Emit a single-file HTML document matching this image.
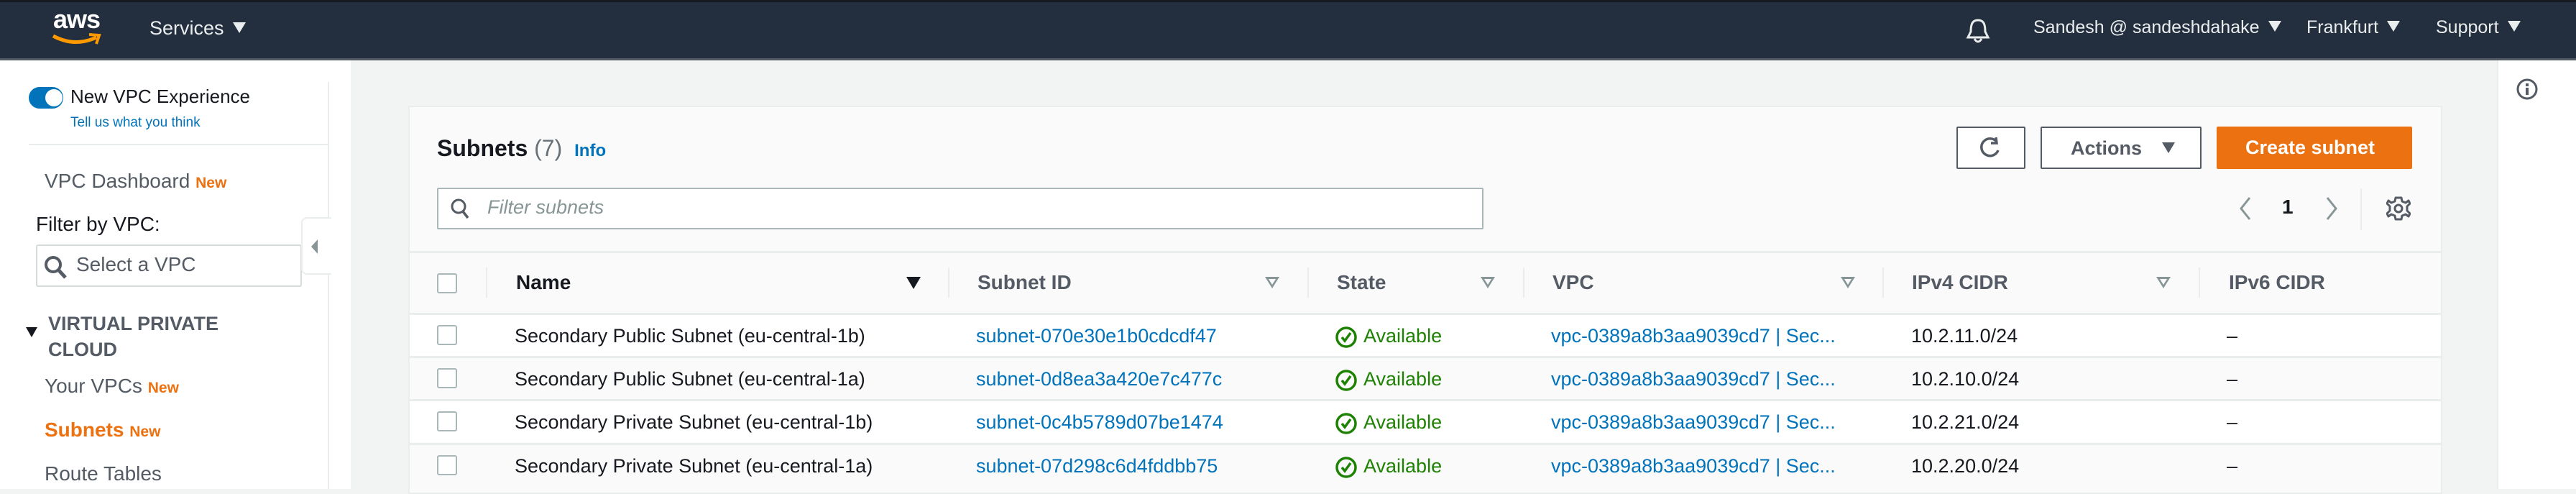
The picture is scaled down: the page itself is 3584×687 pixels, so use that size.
<!DOCTYPE html>
<html><head><meta charset="utf-8"><style>
*{margin:0;padding:0;box-sizing:border-box}
body{width:3584px;height:680px;overflow:hidden;background:#f2f3f3;font-family:"Liberation Sans",sans-serif;position:relative;color:#16191f}
.a{position:absolute;white-space:nowrap}
.hdr{left:0;top:0;width:3584px;height:84px;background:#232f3e;border-bottom:3px solid #545b64;border-top:3px solid #16191f}
.ht{color:#eaeded;font-size:25px;top:24px}
.tri{display:inline-block;width:0;height:0;border-left:9px solid transparent;border-right:9px solid transparent;border-top:15px solid currentColor;margin-left:12px;vertical-align:2px}
.side{left:0;top:84px;width:488px;height:596px;background:#fff}
.nav{font-size:28px;color:#545b64}
.new{color:#ec7211;font-size:21px;font-weight:bold}
.panel{left:568px;top:147px;width:2830px;height:540px;background:#fafafa;border:2px solid #eaeded}
.th{font-size:28px;font-weight:bold;color:#545b64;top:377px}
.div{width:2px;height:42px;background:#eaeded;top:372px}
.fi{top:385px;width:0;height:0;border-left:10px solid transparent;border-right:10px solid transparent;border-top:16px solid #879596}
.fi:after{content:"";position:absolute;left:-5px;top:-13px;border-left:5px solid transparent;border-right:5px solid transparent;border-top:8px solid #fafafa}
.row{left:570px;width:2826px;height:60px;border-top:3px solid #eaeded}
.cb{width:28px;height:28px;border:2px solid #aab7b8;border-radius:3px;background:#fff;left:608px}
.td{font-size:27px}
.lk{color:#0073bb}
.ok{color:#1d8102}
</style></head><body>
<div class="a hdr"></div>
<div class="a" style="left:74px;top:6px;color:#fff;font-size:36px;font-weight:bold;letter-spacing:-1px">aws</div>
<svg class="a" style="left:72px;top:44px" width="70" height="22" viewBox="0 0 70 22"><path d="M2 6 Q32 22 62 8" stroke="#ff9900" stroke-width="5" fill="none"/><path d="M52 4 L66 5 L62 17" stroke="#ff9900" stroke-width="4" fill="none"/></svg>
<div class="a ht" style="left:208px;font-size:27px">Services<span class="tri"></span></div>
<svg class="a" style="left:2734px;top:24px" width="36" height="40" viewBox="0 0 36 40"><path d="M18 4 C9 4 8 12 8 20 L4 28 L32 28 L28 20 C28 12 27 4 18 4Z M13 30 Q18 38 23 30" stroke="#eaeded" stroke-width="3" fill="none"/></svg>
<div class="a ht" style="left:2829px">Sandesh @ sandeshdahake<span class="tri"></span></div>
<div class="a ht" style="left:3209px">Frankfurt<span class="tri"></span></div>
<div class="a ht" style="left:3389px">Support<span class="tri"></span></div>

<div class="a side"></div>
<div class="a" style="left:456px;top:114px;width:2px;height:566px;background:#eaeded"></div>
<div class="a" style="left:40px;top:121px;width:48px;height:30px;border-radius:15px;background:#0073bb"></div>
<div class="a" style="left:63px;top:124px;width:24px;height:24px;border-radius:12px;background:#fff"></div>
<div class="a" style="left:98px;top:119px;font-size:26px;color:#16191f">New VPC Experience</div>
<div class="a" style="left:98px;top:160px;font-size:19px;color:#0073bb">Tell us what you think</div>
<div class="a" style="left:40px;top:200px;width:418px;height:2px;background:#eaeded"></div>
<div class="a nav" style="left:62px;top:236px">VPC Dashboard <span class="new">New</span></div>
<div class="a" style="left:50px;top:296px;font-size:28px;color:#16191f">Filter by VPC:</div>
<div class="a" style="left:50px;top:340px;width:370px;height:59px;border:2px solid #d5dbdb;border-radius:3px;background:#fff"></div>
<svg class="a" style="left:60px;top:354px" width="36" height="36" viewBox="0 0 36 36"><circle cx="14" cy="14" r="10" stroke="#545b64" stroke-width="4" fill="none"/><path d="M21 21 L31 32" stroke="#545b64" stroke-width="5"/></svg>
<div class="a" style="left:106px;top:352px;font-size:28px;color:#545b64">Select a VPC</div>
<div class="a" style="left:419px;top:302px;width:42px;height:80px;background:#fff;border:2px solid #eaeded;border-right:none;border-radius:8px 0 0 8px"></div>
<div class="a" style="left:433px;top:333px;border-top:10px solid transparent;border-bottom:10px solid transparent;border-right:9px solid #879596"></div>
<div class="a" style="left:36px;top:455px;border-left:8px solid transparent;border-right:8px solid transparent;border-top:14px solid #16191f"></div>
<div class="a" style="left:67px;top:432px;font-size:27px;font-weight:bold;color:#545b64;line-height:36px">VIRTUAL PRIVATE<br>CLOUD</div>
<div class="a nav" style="left:62px;top:521px">Your VPCs <span class="new">New</span></div>
<div class="a nav" style="left:62px;top:582px;color:#ec7211;font-weight:bold">Subnets <span class="new">New</span></div>
<div class="a nav" style="left:62px;top:643px">Route Tables</div>

<div class="a" style="left:3474px;top:84px;width:110px;height:596px;background:#fff;border-left:2px solid #eaeded"></div>
<svg class="a" style="left:3500px;top:108px" width="32" height="32" viewBox="0 0 32 32"><circle cx="16" cy="16" r="13" stroke="#545b64" stroke-width="3" fill="none"/><rect x="14" y="14" width="4" height="10" fill="#545b64"/><rect x="14" y="8" width="4" height="4" fill="#545b64"/></svg>

<div class="a panel"></div>
<div class="a" style="left:608px;top:188px;font-size:32px;font-weight:bold">Subnets <span style="font-weight:normal;color:#687078">(7)</span> <span style="font-size:24px;color:#0073bb;margin-left:8px">Info</span></div>
<div class="a" style="left:2722px;top:176px;width:96px;height:59px;border:2px solid #545b64;border-radius:2px;background:#fff"></div>
<svg class="a" style="left:2752px;top:189px" width="36" height="34" viewBox="0 0 36 34"><path d="M26 8 A12 12 0 1 0 28 20" stroke="#545b64" stroke-width="3.5" fill="none"/><path d="M25 2 L26 10 L18 10" stroke="#545b64" stroke-width="3.5" fill="none"/></svg>
<div class="a" style="left:2839px;top:176px;width:224px;height:59px;border:2px solid #545b64;border-radius:2px;background:#fff;font-size:27px;font-weight:bold;color:#545b64;padding:13px 0 0 40px">Actions<span class="tri" style="margin-left:28px"></span></div>
<div class="a" style="left:3084px;top:176px;width:272px;height:59px;border-radius:2px;background:#ec7211;color:#fff;font-size:27px;font-weight:bold;padding:14px 0 0 40px">Create subnet</div>
<div class="a" style="left:608px;top:261px;width:1456px;height:58px;border:2px solid #aab7b8;border-radius:2px;background:#fff"></div>
<svg class="a" style="left:626px;top:274px" width="30" height="34" viewBox="0 0 30 34"><circle cx="12" cy="13" r="9" stroke="#545b64" stroke-width="3" fill="none"/><path d="M18 20 L25 29" stroke="#545b64" stroke-width="3.5"/></svg>
<div class="a" style="left:678px;top:273px;font-size:27px;font-style:italic;color:#879596">Filter subnets</div>
<svg class="a" style="left:3112px;top:272px" width="24" height="36" viewBox="0 0 24 36"><path d="M18 3 L6 18 L18 33" stroke="#879596" stroke-width="3" fill="none"/></svg>
<div class="a" style="left:3175px;top:272px;font-size:28px;font-weight:bold">1</div>
<svg class="a" style="left:3232px;top:272px" width="24" height="36" viewBox="0 0 24 36"><path d="M6 3 L18 18 L6 33" stroke="#879596" stroke-width="3" fill="none"/></svg>
<div class="a" style="left:3284px;top:262px;width:2px;height:58px;background:#eaeded"></div>
<svg class="a" style="left:3320px;top:272px" width="34" height="36" viewBox="0 0 34 36"><path d="M17 3 L21 3 L22 8 L27 10 L31 7 L33 11 L29 15 L29 21 L33 25 L31 29 L27 26 L22 28 L21 33 L13 33 L12 28 L7 26 L3 29 L1 25 L5 21 L5 15 L1 11 L3 7 L7 10 L12 8 L13 3Z" stroke="#545b64" stroke-width="3" fill="none" stroke-linejoin="round"/><circle cx="17" cy="18" r="5" stroke="#545b64" stroke-width="3" fill="none"/></svg>

<div class="a" style="left:570px;top:349px;width:2826px;height:3px;background:#eaeded"></div>
<div class="a cb" style="top:380px"></div>
<div class="a div" style="left:676px"></div>
<div class="a th" style="left:718px;color:#16191f">Name</div>
<div class="a" style="left:1261px;top:385px;border-left:10px solid transparent;border-right:10px solid transparent;border-top:17px solid #16191f"></div>
<div class="a div" style="left:1319px"></div>
<div class="a th" style="left:1360px">Subnet ID</div>
<div class="a fi" style="left:1760px"></div>
<div class="a div" style="left:1819px"></div>
<div class="a th" style="left:1860px">State</div>
<div class="a fi" style="left:2060px"></div>
<div class="a div" style="left:2119px"></div>
<div class="a th" style="left:2160px">VPC</div>
<div class="a fi" style="left:2561px"></div>
<div class="a div" style="left:2619px"></div>
<div class="a th" style="left:2660px">IPv4 CIDR</div>
<div class="a fi" style="left:3000px"></div>
<div class="a div" style="left:3059px"></div>
<div class="a th" style="left:3101px">IPv6 CIDR</div>

<div class="a row" style="top:435px;background:#fff"></div>
<div class="a row" style="top:495px;background:#fafafa"></div>
<div class="a row" style="top:555px;background:#fff"></div>
<div class="a row" style="top:616px;background:#fafafa"></div>

<div class="a cb" style="top:452px"></div>
<div class="a cb" style="top:512px"></div>
<div class="a cb" style="top:572px"></div>
<div class="a cb" style="top:633px"></div>

<div class="a td" style="left:716px;top:452px">Secondary Public Subnet (eu-central-1b)</div>
<div class="a td" style="left:716px;top:512px">Secondary Public Subnet (eu-central-1a)</div>
<div class="a td" style="left:716px;top:572px">Secondary Private Subnet (eu-central-1b)</div>
<div class="a td" style="left:716px;top:633px">Secondary Private Subnet (eu-central-1a)</div>

<div class="a td lk" style="left:1358px;top:452px">subnet-070e30e1b0cdcdf47</div>
<div class="a td lk" style="left:1358px;top:512px">subnet-0d8ea3a420e7c477c</div>
<div class="a td lk" style="left:1358px;top:572px">subnet-0c4b5789d07be1474</div>
<div class="a td lk" style="left:1358px;top:633px">subnet-07d298c6d4fddbb75</div>

<svg class="a" style="left:1857px;top:453px" width="32" height="32" viewBox="0 0 32 32"><circle cx="16" cy="16" r="13" stroke="#1d8102" stroke-width="3.5" fill="none"/><path d="M10 16 L14 21 L22 10" stroke="#1d8102" stroke-width="3.5" fill="none"/></svg>
<svg class="a" style="left:1857px;top:513px" width="32" height="32" viewBox="0 0 32 32"><circle cx="16" cy="16" r="13" stroke="#1d8102" stroke-width="3.5" fill="none"/><path d="M10 16 L14 21 L22 10" stroke="#1d8102" stroke-width="3.5" fill="none"/></svg>
<svg class="a" style="left:1857px;top:573px" width="32" height="32" viewBox="0 0 32 32"><circle cx="16" cy="16" r="13" stroke="#1d8102" stroke-width="3.5" fill="none"/><path d="M10 16 L14 21 L22 10" stroke="#1d8102" stroke-width="3.5" fill="none"/></svg>
<svg class="a" style="left:1857px;top:634px" width="32" height="32" viewBox="0 0 32 32"><circle cx="16" cy="16" r="13" stroke="#1d8102" stroke-width="3.5" fill="none"/><path d="M10 16 L14 21 L22 10" stroke="#1d8102" stroke-width="3.5" fill="none"/></svg>
<div class="a td ok" style="left:1897px;top:452px">Available</div>
<div class="a td ok" style="left:1897px;top:512px">Available</div>
<div class="a td ok" style="left:1897px;top:572px">Available</div>
<div class="a td ok" style="left:1897px;top:633px">Available</div>

<div class="a td lk" style="left:2158px;top:452px">vpc-0389a8b3aa9039cd7 | Sec...</div>
<div class="a td lk" style="left:2158px;top:512px">vpc-0389a8b3aa9039cd7 | Sec...</div>
<div class="a td lk" style="left:2158px;top:572px">vpc-0389a8b3aa9039cd7 | Sec...</div>
<div class="a td lk" style="left:2158px;top:633px">vpc-0389a8b3aa9039cd7 | Sec...</div>

<div class="a td" style="left:2659px;top:452px">10.2.11.0/24</div>
<div class="a td" style="left:2659px;top:512px">10.2.10.0/24</div>
<div class="a td" style="left:2659px;top:572px">10.2.21.0/24</div>
<div class="a td" style="left:2659px;top:633px">10.2.20.0/24</div>

<div class="a td" style="left:3098px;top:452px">–</div>
<div class="a td" style="left:3098px;top:512px">–</div>
<div class="a td" style="left:3098px;top:572px">–</div>
<div class="a td" style="left:3098px;top:633px">–</div>
</body></html>
